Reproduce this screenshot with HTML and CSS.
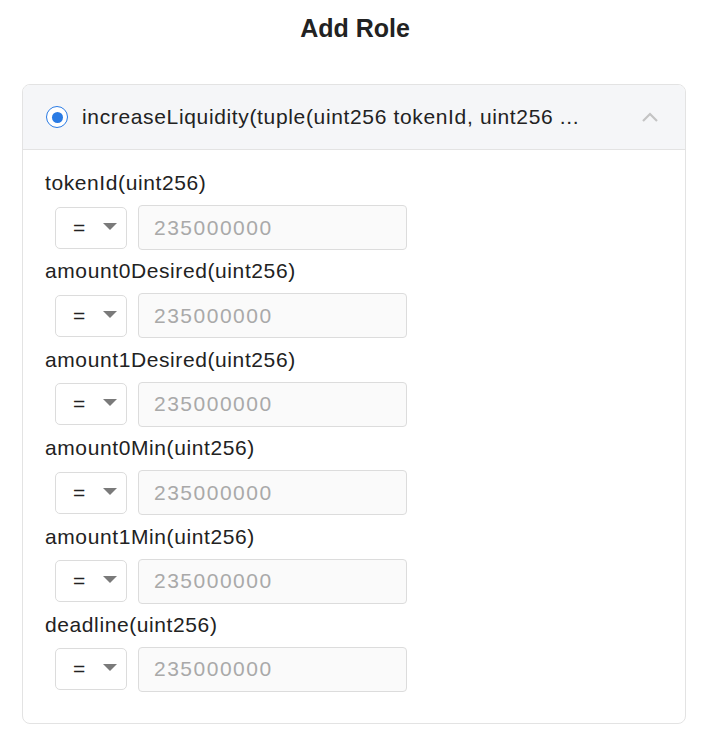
FILE: index.html
```html
<!DOCTYPE html>
<html>
<head>
<meta charset="utf-8">
<link rel="stylesheet" href="styles.css">
</head>
<body>
<div class="page">
  <h1 class="title">Add Role</h1>
  <div class="card">
    <div class="card-head">
      <span class="radio"><span class="radio-dot"></span></span>
      <span class="head-text">increaseLiquidity(tuple(uint256 tokenId, uint256 ...</span>
      <svg class="chevron" width="18" height="12" viewBox="0 0 18 12"><path d="M2 10 L9 3 L16 10" fill="none" stroke="#c4c4c4" stroke-width="2.2"/></svg>
    </div>
    <div class="card-body">
      <div class="field">
        <div class="label">tokenId(uint256)</div>
        <div class="row"><div class="select"><span class="eq">=</span><span class="caret"></span></div><div class="input">235000000</div></div>
      </div>
      <div class="field">
        <div class="label">amount0Desired(uint256)</div>
        <div class="row"><div class="select"><span class="eq">=</span><span class="caret"></span></div><div class="input">235000000</div></div>
      </div>
      <div class="field">
        <div class="label">amount1Desired(uint256)</div>
        <div class="row"><div class="select"><span class="eq">=</span><span class="caret"></span></div><div class="input">235000000</div></div>
      </div>
      <div class="field">
        <div class="label">amount0Min(uint256)</div>
        <div class="row"><div class="select"><span class="eq">=</span><span class="caret"></span></div><div class="input">235000000</div></div>
      </div>
      <div class="field">
        <div class="label">amount1Min(uint256)</div>
        <div class="row"><div class="select"><span class="eq">=</span><span class="caret"></span></div><div class="input">235000000</div></div>
      </div>
      <div class="field">
        <div class="label">deadline(uint256)</div>
        <div class="row"><div class="select"><span class="eq">=</span><span class="caret"></span></div><div class="input">235000000</div></div>
      </div>
    </div>
  </div>
</div>
</body>
</html>
```
FILE: styles.css
```css
html, body {
  margin: 0;
  padding: 0;
  background: #ffffff;
}
body {
  font-family: "Liberation Sans", Arial, sans-serif;
  color: #222222;
}
.page {
  padding: 12px 24px 0 22px;
}
.title {
  margin: 0;
  text-align: center;
  font-size: 25px;
  font-weight: bold;
  line-height: 32px;
  color: #222;
  padding-left: 2px;
}
.card {
  margin-top: 40px;
  border: 1.5px solid #e3e3e3;
  border-radius: 8px;
  overflow: hidden;
}
.card-head {
  height: 64px;
  background: #f5f6f8;
  border-bottom: 1.5px solid #e3e3e3;
  display: flex;
  align-items: center;
  padding: 0 26px 0 23px;
}
.radio {
  width: 22px;
  height: 22px;
  border: 1.5px solid #2a7be4;
  border-radius: 50%;
  box-sizing: border-box;
  display: flex;
  align-items: center;
  justify-content: center;
  background: #fff;
  flex: none;
}
.radio-dot {
  width: 11px;
  height: 11px;
  border-radius: 50%;
  background: #2a7be4;
}
.head-text {
  margin-left: 14px;
  font-size: 21px;
  letter-spacing: 0.65px;
  flex: 1;
  white-space: nowrap;
}
.chevron {
  flex: none;
}
.card-body {
  padding: 21px 0 22px 22px;
}
.field {
  margin-bottom: 9.4px;
}
.label {
  font-size: 21px;
  letter-spacing: 0.6px;
  line-height: 24px;
  margin-bottom: 10px;
}
.row {
  display: flex;
  align-items: center;
  margin-left: 10px;
  gap: 11px;
}
.select {
  width: 72px;
  height: 42px;
  box-sizing: border-box;
  border: 1px solid #dcdcdc;
  border-radius: 5px;
  background: #fff;
  display: flex;
  align-items: center;
  padding-left: 17px;
}
.eq {
  font-size: 21px;
  color: #222;
  line-height: 20px;
}
.caret {
  margin-left: 18px;
  width: 0;
  height: 0;
  border-left: 7px solid transparent;
  border-right: 7px solid transparent;
  border-top: 7px solid #7a7a7a;
  margin-top: -3px;
}
.input {
  width: 269px;
  height: 45px;
  box-sizing: border-box;
  border: 1px solid #dcdcdc;
  border-radius: 4px;
  background: #fafafa;
  color: #a9a9a9;
  font-size: 21px;
  letter-spacing: 1.5px;
  display: flex;
  align-items: center;
  padding-left: 15px;
}
```
